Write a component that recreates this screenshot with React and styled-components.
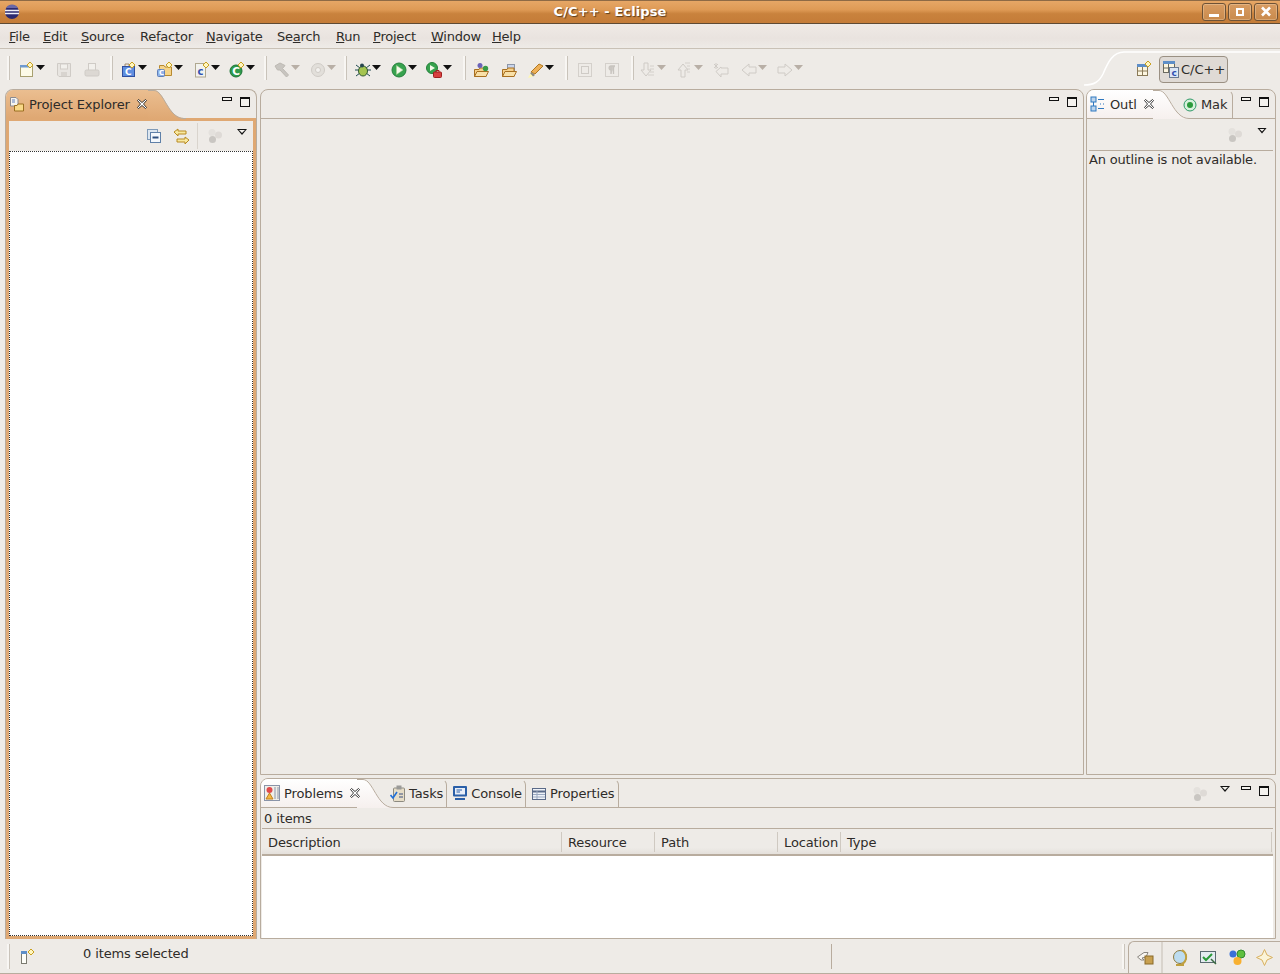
import React from "react";
import styled, { createGlobalStyle } from "styled-components";

const GlobalStyle = createGlobalStyle`
    html, body {
        margin: 0;
        padding: 0;
        background: #EEEBE7;
        font-family: "DejaVu Sans", sans-serif;
        font-size: 13px;
        letter-spacing: -0.12px;
        color: #2e2c29;
    }
    * { box-sizing: border-box; }
`

const Svg = ({ children, w = 16, h = 16 }) => (
    <svg width={w} height={h} viewBox={`0 0 ${w} ${h}`} style={{ display: 'block', flex: 'none' }}>{children}</svg>
)

const Star = ({ x = 11, y = 3 }) => (
    <path d={`M${x} ${y - 3}L${x + 3} ${y}L${x} ${y + 3}L${x - 3} ${y}Z`} fill="#fff6c0" stroke="#c9a020" />
)

const icons = {
    newFile: <Svg><rect x="1.5" y="3.5" width="12" height="11" fill="#fdfbe8" stroke="#a8a070" /><rect x="1" y="3" width="10" height="2.5" fill="#6f9ad0" /><Star /></Svg>,
    save: <Svg><path d="M1.5 1.5H14.5V14.5H3L1.5 13Z" fill="#e8e5e1" stroke="#cfcbc6" /><rect x="4.5" y="2" width="7" height="5" fill="#f2f0ec" stroke="#d2cec9" /><rect x="5" y="10" width="6" height="4" fill="#d8d4cf" /></Svg>,
    print: <Svg><rect x="4.5" y="1.5" width="7" height="7" fill="#f2f0ec" stroke="#cfcbc6" /><rect x="1" y="8" width="14" height="6" rx="1.5" fill="#dcd8d3" stroke="#cfcbc6" /></Svg>,
    cProject: <Svg><path d="M4 4V2H8V4" fill="none" stroke="#a08a70" /><rect x="1.5" y="4.5" width="12" height="10" fill="#5f8ee0" stroke="#2f4f9f" /><text x="4" y="13" fontSize="9" fontWeight="700" fill="#fff" fontFamily="DejaVu Sans">C</text><Star /></Svg>,
    cFolder: <Svg><path d="M2.5 6.5V3.5H7L8 5H14.5V13.5H7" fill="#f5d48a" stroke="#b88a30" /><rect x="0.5" y="7.5" width="7" height="7" rx="1" fill="#8fb0e8" stroke="#5f80b8" /><text x="2" y="13" fontSize="7" fontWeight="700" fill="#fff" fontFamily="DejaVu Sans">C</text><Star x={12} /></Svg>,
    cFile: <Svg><rect x="1.5" y="1.5" width="10" height="13.5" fill="#f2f2ee" stroke="#b0a890" /><text x="3.5" y="12.5" fontSize="10" fontWeight="700" fill="#2f50b0" fontFamily="DejaVu Sans">c</text><Star x={12} /></Svg>,
    gClass: <Svg><circle cx="7" cy="9" r="6" fill="#2e9a4c" stroke="#1d7437" /><text x="3.2" y="13" fontSize="10.5" fontWeight="700" fill="#fff" fontFamily="DejaVu Sans">C</text><Star x={12} /></Svg>,
    hammer: <Svg><path d="M1 4L6 1L11 3.5L8.5 6.5L14.5 13L12.5 15L6 8L3.5 8Z" fill="#c8c5c0" stroke="#bdb9b3" /></Svg>,
    disc: <Svg><circle cx="8" cy="8" r="6.5" fill="#e2dfda" stroke="#cfcbc6" /><circle cx="8" cy="8" r="2.5" fill="#f4f2ef" stroke="#cfcbc6" /></Svg>,
    bug: <Svg><path d="M1 3L5 6M15 3L11 6M0 8H4M12 8H16M1 14L5 11M15 14L11 11" stroke="#1f4a50" /><ellipse cx="8" cy="9" rx="4.5" ry="5" fill="#a4c450" stroke="#2f5a30" /><circle cx="7" cy="3.5" r="2" fill="#27474f" /></Svg>,
    run: <Svg><circle cx="8" cy="8" r="7" fill="#37a24e" stroke="#24803a" /><path d="M5.5 3.5L12 8L5.5 12.5Z" fill="#f4f9ea" stroke="#a8d090" strokeWidth="0.5" /></Svg>,
    runExt: <Svg><circle cx="6" cy="6" r="5.5" fill="#37a24e" stroke="#24803a" /><path d="M4 3L9 6L4 9Z" fill="#f4f9ea" /><rect x="7.5" y="10" width="8" height="5.5" rx="1" fill="#d84040" stroke="#a02020" /><path d="M10 10V8.5H13V10" fill="none" stroke="#a02020" /></Svg>,
    openType: <Svg><path d="M1.5 7.5H6L7 6H13V14.5H1.5Z" fill="#f5d08a" stroke="#a86f20" /><path d="M1.5 14.5L4 9.5H15.5L13 14.5Z" fill="#f8e0a8" stroke="#a86f20" /><circle cx="7" cy="3.5" r="2.5" fill="#6a62b8" /><circle cx="12.5" cy="6.5" r="2.7" fill="#3a9a48" /></Svg>,
    openTask: <Svg><rect x="6.5" y="2.5" width="7" height="6" fill="#c8d4ec" stroke="#8c96a8" /><path d="M1.5 7.5H6L7 6H13V14.5H1.5Z" fill="#f5d08a" stroke="#a86f20" /><path d="M1.5 14.5L4 9.5H15.5L13 14.5Z" fill="#f8e0a8" stroke="#a86f20" /></Svg>,
    pen: <Svg><path d="M3 10L11 2L15 4L7 12Z" fill="#eeb058" stroke="#b07820" /><path d="M3 10L7 13L5 14.5L2 12.5Z" fill="#8c8880" /><path d="M0 16L2.5 11.5L5 14.5Z" fill="#fff8b0" /></Svg>,
    docOutline: <Svg><rect x="1.5" y="1.5" width="13" height="13" fill="#eeebe7" stroke="#d4d0cb" /><rect x="4.5" y="4.5" width="7" height="7" fill="none" stroke="#cfcbc6" /></Svg>,
    pilcrow: <Svg><rect x="1.5" y="1.5" width="13" height="13" fill="#eeebe7" stroke="#d4d0cb" /><path d="M7 12V4H11M9.5 12V4M7 8C4.5 8 4.5 4 7 4" fill="#d0ccc7" stroke="#c8c4bf" strokeWidth="1.3" /></Svg>,
    nextAnn: <Svg><path d="M4 1H8V8H11L6 14L1 8H4Z" fill="#eeebe7" stroke="#cfcbc6" /><path d="M10 4H14M10 7H14M10 10H14M8 13H14" stroke="#d4d0cb" /></Svg>,
    prevAnn: <Svg><path d="M4 15H8V8H11L6 2L1 8H4Z" fill="#eeebe7" stroke="#cfcbc6" /><path d="M8 1H13M10 4H13M10 7H13M10 10H13" stroke="#d4d0cb" /></Svg>,
    lastEdit: <Svg><path d="M1 2L5 6M5 2L1 6M3 1V7" stroke="#cfcbc6" /><path d="M15 6V12H8V15L3 9.5L8 5V6Z" fill="#eeebe7" stroke="#cfcbc6" /></Svg>,
    back: <Svg><path d="M1 8L8 2V5H15V11H8V14Z" fill="#eeebe7" stroke="#cfcbc6" /></Svg>,
    forward: <Svg><path d="M15 8L8 2V5H1V11H8V14Z" fill="#eeebe7" stroke="#cfcbc6" /></Svg>,
    perspective: <Svg><rect x="1.5" y="3.5" width="10" height="11" fill="#fdf6e0" stroke="#8a7a58" /><rect x="1" y="3" width="11" height="3" fill="#5f8fc8" /><path d="M6.5 6V14M2 10H11" stroke="#8a7a58" /><Star x={12} /></Svg>,
    cPersp: <Svg w={17} h={17}><rect x="0.5" y="0.5" width="11" height="11" fill="#fdf6e0" stroke="#6a6a60" /><rect x="0" y="0" width="12" height="3" fill="#5f8fc8" /><path d="M5.5 3V11M1 7H11" stroke="#6a6a60" /><rect x="6.5" y="6.5" width="9" height="10" fill="#dce6f4" stroke="#6a7a90" /><text x="8.5" y="15" fontSize="9" fontWeight="700" fill="#2f50b0" fontFamily="DejaVu Sans">c</text></Svg>,
    explorer: <Svg><path d="M1.5 1.5H7L9 3.5V10H1.5Z" fill="#f6f4ee" stroke="#8a8a90" /><path d="M3 4H6M3 6H6" stroke="#6080c0" /><path d="M5.5 9.5H8L9 8H14.5V15H5.5Z" fill="#f8d888" stroke="#9a6f20" /></Svg>,
    collapse: <Svg><rect x="1.5" y="1.5" width="10" height="10" fill="#dce6f0" stroke="#7f9ab8" /><rect x="4.5" y="4.5" width="10" height="10" fill="#f4f8fc" stroke="#5f80a8" /><path d="M6.5 9.5H12.5" stroke="#2f5080" strokeWidth="2" /></Svg>,
    link: <Svg w={17} h={17}><path d="M1 4L5 1V3H13V6H5V8Z" fill="#f8e8a0" stroke="#b88a20" /><path d="M16 12L12 9V11H4V14H12V16Z" fill="#f8e8a0" stroke="#b88a20" /></Svg>,
    dots: <Svg><circle cx="5" cy="4.5" r="3.5" fill="#e4e1dd" /><circle cx="11.5" cy="7" r="3.5" fill="#dedad6" /><circle cx="5.5" cy="11.5" r="3.5" fill="#c9c6c2" /></Svg>,
    outline: <Svg><rect x="1" y="1" width="5" height="5" fill="#bcd4ec" stroke="#2f78c0" /><rect x="1" y="10" width="5" height="5" fill="#bcd4ec" stroke="#2f78c0" /><path d="M3.5 6V10M8 3.5H14M10 8H11M13 8H14M8 12.5H14" stroke="#2f78c0" /></Svg>,
    make: <Svg w={14} h={14}><circle cx="7" cy="7" r="6" fill="#d8f0dc" stroke="#2f9a68" /><circle cx="7" cy="7" r="3" fill="#2c9a3c" /></Svg>,
    problems: <Svg><rect x="0.5" y="0.5" width="15" height="15" fill="#f0eee8" stroke="#8a94a8" /><circle cx="5.5" cy="5" r="3" fill="#e04a4a" /><path d="M5.5 8L9 14H2Z" fill="#f5b840" stroke="#c08020" /><path d="M11 2V14M14 2V14" stroke="#8a94a8" /></Svg>,
    tasks: <Svg w={15} h={17}><rect x="3.5" y="3" width="11" height="13.5" rx="1" fill="#e6ddc8" stroke="#8c8a80" /><rect x="6.5" y="0.5" width="5" height="4" fill="#9a9a98" /><path d="M0.5 10L3 13L7 7" fill="none" stroke="#1f6fd8" strokeWidth="1.6" /><path d="M9 9H13M9 12H13" stroke="#3a5080" /></Svg>,
    console: <Svg w={14} h={15}><rect x="0" y="0" width="14" height="10.5" rx="1" fill="#2a5fa8" /><rect x="2" y="2" width="10" height="6.5" fill="#e8eef8" /><path d="M3.5 4H9M3.5 6H7" stroke="#2a5fa8" /><path d="M2 13H12" stroke="#2a5fa8" strokeWidth="2" /></Svg>,
    properties: <Svg w={14} h={14}><rect x="0.5" y="1.5" width="13" height="11" fill="#eef2f8" stroke="#5a6a88" /><path d="M1 4.5H13" stroke="#5a6a88" strokeWidth="2" /><path d="M1 7.5H13M1 10H13M5 4V12" stroke="#9aa8c0" /></Svg>,
    fastView: <Svg><rect x="1.5" y="3.5" width="5" height="12" fill="#fdfdf8" stroke="#7a7a70" /><rect x="1" y="3" width="6" height="3" fill="#5f8fc8" /><path d="M11 1L14 4L11 7L8 4Z" fill="#fff6c0" stroke="#c9a020" /></Svg>,
    lock: <Svg w={17} h={14}><path d="M0.5 6L7 1.5H11L9 6L5 7L7 9H4Z" fill="#f8f6f2" stroke="#8a8680" /><rect x="8" y="5" width="8" height="8" fill="#c8a050" stroke="#8a6a28" /></Svg>,
    globe: <Svg w={15} h={18}><circle cx="7" cy="8" r="6.5" fill="#bcdcf0" stroke="#8a7a40" /><path d="M9 1A8 8 0 0 1 9 15" fill="none" stroke="#c0a040" strokeWidth="2" /><path d="M3 16H11" stroke="#c0a040" strokeWidth="2" /></Svg>,
    check: <Svg w={17} h={14}><rect x="0.5" y="0.5" width="15" height="11" fill="#e4ecf0" stroke="#5a6a70" /><path d="M3 6L6 9L12 3" fill="none" stroke="#2a9a38" strokeWidth="2" /><path d="M11 8L16 13" stroke="#3a6a40" strokeWidth="1.5" /></Svg>,
    update: <Svg w={17} h={17}><circle cx="4" cy="5" r="3.5" fill="#3a70d8" /><path d="M12 1A4 4 0 0 1 12 9A4 4 0 0 1 12 1Z" fill="#60c040" stroke="#308a30" /><circle cx="8.5" cy="12" r="4" fill="#f8b030" /></Svg>,
    tip: <Svg w={17} h={17}><path d="M8.5 0.5L11 6L16.5 8.5L11 11L8.5 16.5L6 11L0.5 8.5L6 6Z" fill="#fbf4d8" stroke="#d8b060" /></Svg>,
}

const toolItems = [
    { sep: true, ml: 7 },
    { icon: 'newFile', arrow: true, ml: 9 },
    { icon: 'save', ml: 11 },
    { icon: 'print', ml: 12 },
    { sep: true, ml: 10 },
    { icon: 'cProject', arrow: true, ml: 8 },
    { icon: 'cFolder', arrow: true, ml: 10 },
    { icon: 'cFile', arrow: true, ml: 11 },
    { icon: 'gClass', arrow: true, ml: 9 },
    { sep: true, ml: 9 },
    { icon: 'hammer', arrow: true, off: true, ml: 7 },
    { icon: 'disc', arrow: true, off: true, ml: 10 },
    { sep: true, ml: 8 },
    { icon: 'bug', arrow: true, ml: 8 },
    { icon: 'run', arrow: true, ml: 10 },
    { icon: 'runExt', arrow: true, ml: 9 },
    { sep: true, ml: 11 },
    { icon: 'openType', ml: 7 },
    { icon: 'openTask', ml: 12 },
    { icon: 'pen', arrow: true, ml: 11 },
    { sep: true, ml: 11 },
    { icon: 'docOutline', ml: 9 },
    { icon: 'pilcrow', ml: 11 },
    { sep: true, ml: 11 },
    { icon: 'nextAnn', arrow: true, off: true, ml: 6 },
    { icon: 'prevAnn', arrow: true, off: true, ml: 11 },
    { icon: 'lastEdit', ml: 10 },
    { icon: 'back', arrow: true, off: true, ml: 12 },
    { icon: 'forward', arrow: true, off: true, ml: 10 },
]

const menus = [
    { w: 34, parts: ['', 'F', 'ile'] },
    { w: 38, parts: ['', 'E', 'dit'] },
    { w: 59, parts: ['', 'S', 'ource'] },
    { w: 66, parts: ['Refac', 't', 'or'] },
    { w: 71, parts: ['', 'N', 'avigate'] },
    { w: 59, parts: ['Se', 'a', 'rch'] },
    { w: 37, parts: ['', 'R', 'un'] },
    { w: 58, parts: ['', 'P', 'roject'] },
    { w: 61, parts: ['', 'W', 'indow'] },
    { w: 40, parts: ['', 'H', 'elp'] },
]

const Curve = ({ id, top, bottom }) => (
    <CurveBox>
        <svg width="38" height="29" viewBox="0 0 38 29" style={{ display: 'block' }}>
            <defs>
                <linearGradient id={id} x1="0" y1="0" x2="0" y2="1">
                    <stop offset="0" stopColor={top} />
                    <stop offset="1" stopColor={bottom} />
                </linearGradient>
            </defs>
            <path d="M0 0H6C16 0 20 28 36 28H38V29H0Z" fill={`url(#${id})`} />
            <path d="M0 0.5H6C16 0.5 20 28.5 36 28.5H38" fill="none" stroke="#B8AC9E" />
        </svg>
    </CurveBox>
)

const CloseIcon = () => (
    <CloseMark>
        <svg width="10" height="10" viewBox="0 0 10 10" style={{ display: 'block' }}>
            <path d="M0.5 1.5L1.5 0.5L5 3.5L8.5 0.5L9.5 1.5L6.5 5L9.5 8.5L8.5 9.5L5 6.5L1.5 9.5L0.5 8.5L3.5 5Z" fill="#fff" stroke="#222" strokeWidth="0.9" />
        </svg>
    </CloseMark>
)

const ViewButtons = ({ menu }) => (
    <ViewControls>
        {menu && <MenuArrow />}
        <MinButton />
        <MaxButton />
    </ViewControls>
)

function App(){
    return(
        <>
            <GlobalStyle />
            <Window>
                <TitleBar>
                    <TitleLogo>
                        <svg width="16" height="16" viewBox="0 0 16 16" style={{ display: 'block' }}>
                            <circle cx="8" cy="8" r="7" fill="#2c2a70" />
                            <path d="M2 4A7 7 0 0 1 14 4Z" fill="#6a68a8" />
                            <path d="M1 6.5H15M1 9.5H15" stroke="#f0f0f8" strokeWidth="1.3" />
                        </svg>
                    </TitleLogo>
                    <TitleText>C/C++ - Eclipse</TitleText>
                    <WindowControls>
                        <WindowButton><WinMin /></WindowButton>
                        <WindowButton><WinMax /></WindowButton>
                        <WindowButton>
                            <svg width="12" height="11" viewBox="0 0 12 11" style={{ display: 'block' }}>
                                <path d="M2 1.5L10 9.5M10 1.5L2 9.5" stroke="#fff" strokeWidth="2.6" />
                            </svg>
                        </WindowButton>
                    </WindowControls>
                </TitleBar>

                <MenuBar>
                    {menus.map((m) => (
                        <MenuItem key={m.parts.join('')} $w={m.w}>
                            {m.parts[0]}<u>{m.parts[1]}</u>{m.parts[2]}
                        </MenuItem>
                    ))}
                </MenuBar>

                <ToolBar>
                    {toolItems.map((item, i) => item.sep
                        ? <ToolSep key={i} $ml={item.ml} />
                        : (
                            <ToolItem key={i} $ml={item.ml}>
                                {icons[item.icon]}
                                {item.arrow && <DropArrow $off={item.off} />}
                            </ToolItem>
                        ))}
                    <PerspectiveCurve>
                        <svg width="196" height="40" viewBox="0 0 196 40" style={{ display: 'block' }}>
                            <path d="M0 35C10 35 15 32 19 24C24 12 29 2 40 2H196" fill="none" stroke="#ffffff" strokeWidth="1.5" />
                        </svg>
                    </PerspectiveCurve>
                    <PerspectiveArea>
                        {icons.perspective}
                        <PerspectiveButton>{icons.cPersp}C/C++</PerspectiveButton>
                    </PerspectiveArea>
                </ToolBar>

                <Workspace>
                    <ActiveFolder>
                        <TabStrip>
                            <ActiveTab $w={142}>
                                {icons.explorer}
                                <TabLabel>Project Explorer</TabLabel>
                                <CloseIcon />
                                <Curve id="curveOrange" top="#EBBE90" bottom="#DFA873" />
                            </ActiveTab>
                            <ViewButtons />
                        </TabStrip>
                        <ActiveBody>
                            <ViewToolBar>
                                <ToolSlot $mr={11}>{icons.collapse}</ToolSlot>
                                <ToolSlot $mr={7}>{icons.link}</ToolSlot>
                                <ToolDivider />
                                <ToolSlot $ml={9}>{icons.dots}</ToolSlot>
                                <ToolMenuArrow />
                            </ViewToolBar>
                            <TreeArea />
                        </ActiveBody>
                    </ActiveFolder>

                    <RightColumn>
                        <TopRow>
                            <EditorFolder>
                                <EmptyStrip>
                                    <ViewButtons />
                                </EmptyStrip>
                            </EditorFolder>
                            <OutlineFolder>
                                <TabStrip $line>
                                    <ActiveTab $w={66} $light>
                                        {icons.outline}
                                        <TabLabel>Outl</TabLabel>
                                        <CloseIcon />
                                        <Curve id="curveOutline" top="#ffffff" bottom="#F6F0EE" />
                                    </ActiveTab>
                                    <PlainTab $ml={24} $pr={5}>
                                        {icons.make}
                                        <TabLabel>Mak</TabLabel>
                                    </PlainTab>
                                    <ViewButtons />
                                </TabStrip>
                                <OutlineBar>
                                    {icons.dots}
                                    <ToolMenuArrow />
                                </OutlineBar>
                                <OutlineText>An outline is not available.</OutlineText>
                            </OutlineFolder>
                        </TopRow>

                        <BottomFolder>
                            <TabStrip $line>
                                <ActiveTab $w={96} $light>
                                    {icons.problems}
                                    <TabLabel>Problems</TabLabel>
                                    <CloseIcon />
                                    <Curve id="curveProblems" top="#ffffff" bottom="#F6F0EE" />
                                </ActiveTab>
                                <PlainTab $ml={27}>
                                    {icons.tasks}
                                    <TabLabel>Tasks</TabLabel>
                                </PlainTab>
                                <PlainTab>
                                    {icons.console}
                                    <TabLabel>Console</TabLabel>
                                </PlainTab>
                                <PlainTab>
                                    {icons.properties}
                                    <TabLabel>Properties</TabLabel>
                                </PlainTab>
                                <BottomControls>
                                    {icons.dots}
                                    <ViewButtons menu />
                                </BottomControls>
                            </TabStrip>
                            <ItemCount>0 items</ItemCount>
                            <TableHead>
                                <ColHead $w={300}>Description</ColHead>
                                <ColHead $w={93}>Resource</ColHead>
                                <ColHead $w={123}>Path</ColHead>
                                <ColHead $w={63}>Location</ColHead>
                                <ColHead $w={431}>Type</ColHead>
                            </TableHead>
                            <TableBody />
                        </BottomFolder>
                    </RightColumn>
                </Workspace>

                <StatusBar>
                    <StatusGrip $ml={7} />
                    <StatusIcon>{icons.fastView}</StatusIcon>
                    <StatusText>0 items selected</StatusText>
                    <StatusLine />
                    <StatusGrip $ml={290} />
                    <TrimBox>
                        <TrimIcon>{icons.lock}</TrimIcon>
                        <TrimIcons>
                            {icons.globe}
                            {icons.check}
                            {icons.update}
                            <TipSlot>{icons.tip}</TipSlot>
                        </TrimIcons>
                    </TrimBox>
                </StatusBar>
            </Window>
        </>
    )
}

export default App;

const Window = styled.div`
    width: 1280px;
    height: 974px;
    display: flex;
    flex-direction: column;
    background-color: #EEEBE7;
    overflow: hidden;
`

const TitleBar = styled.div`
    height: 24px;
    flex: none;
    display: flex;
    align-items: center;
    background: linear-gradient(#E6A766 0%, #DE9A55 40%, #C9823D 58%, #C47C38 100%);
    border-top: 1px solid #8E6A45;
    border-bottom: 1px solid #5E4A34;
`

const TitleLogo = styled.div`
    margin-left: 4px;
    flex: none;
`

const TitleText = styled.div`
    flex: 1;
    text-align: center;
    font-weight: 700;
    font-size: 13px;
    letter-spacing: 0.1px;
    color: #fff;
    text-shadow: 1px 1px 1px #5b3c1e;
    padding: 0 2px 2px 0;
`

const WindowControls = styled.div`
    display: flex;
    gap: 2px;
    margin-right: 2px;
    margin-bottom: 1px;
`

const WindowButton = styled.div`
    width: 24px;
    height: 18px;
    display: flex;
    align-items: center;
    justify-content: center;
    border: 1px solid #6E5236;
    border-radius: 3px;
    background: linear-gradient(#D89C62, #C98A4C);
    box-shadow: inset 0 0 0 1px rgba(255, 235, 205, 0.3);
`

const WinMin = styled.div`
    width: 10px;
    height: 3px;
    margin-top: 7px;
    background: #fff;
`

const WinMax = styled.div`
    width: 8px;
    height: 8px;
    border: 2px solid #fff;
`

const MenuBar = styled.div`
    height: 25px;
    flex: none;
    display: flex;
    align-items: center;
    padding: 1px 0 0 9px;
    background: linear-gradient(#EFEAE6 0%, #E9E3DF 60%, #EEEBE7 100%);
    border-bottom: 1px solid #C9C1B6;
`

const MenuItem = styled.div`
    width: ${(p) => p.$w}px;
    flex: none;
    line-height: 24px;
    letter-spacing: -0.22px;
    white-space: nowrap;
    u { text-underline-offset: 1px; }
`

const ToolBar = styled.div`
    height: 40px;
    flex: none;
    display: flex;
    align-items: center;
    position: relative;
    padding-bottom: 2px;
`

const ToolSep = styled.div`
    width: 3px;
    height: 24px;
    flex: none;
    margin-left: ${(p) => p.$ml}px;
    background: #F8F6F3;
    border-right: 1px solid #C9C3BA;
`

const ToolItem = styled.div`
    display: flex;
    align-items: center;
    flex: none;
    margin-top: 3px;
    margin-left: ${(p) => p.$ml}px;
`

const DropArrow = styled.div`
    width: 9px;
    height: 5px;
    margin: -4px 0 0 1px;
    flex: none;
    background: ${(p) => (p.$off ? '#B8AFA6' : '#111')};
    clip-path: polygon(0 0, 100% 0, 50% 100%);
`

const PerspectiveCurve = styled.div`
    position: absolute;
    right: 0;
    top: 1px;
`

const PerspectiveArea = styled.div`
    margin-left: auto;
    margin-right: 52px;
    margin-top: 2px;
    display: flex;
    align-items: center;
    gap: 7px;
    position: relative;
`

const PerspectiveButton = styled.div`
    width: 69px;
    height: 27px;
    display: flex;
    align-items: center;
    gap: 1px;
    padding-left: 3px;
    border: 1px solid #9A9083;
    border-radius: 4px;
    background: #DFDAD5;
    font-size: 13px;
    letter-spacing: 0;
    white-space: nowrap;
`

const Workspace = styled.div`
    height: 850px;
    flex: none;
    display: flex;
    gap: 3px;
    padding-left: 5px;
    padding-right: 4px;
`

const ActiveFolder = styled.div`
    width: 252px;
    flex: none;
    display: flex;
    flex-direction: column;
    border-radius: 8px 8px 0 0;
    border: 1px solid #B8AC9E;
    border-bottom: none;
`

const TabStrip = styled.div`
    height: ${(p) => (p.$line ? 29 : 28)}px;
    flex: none;
    display: flex;
    position: relative;
    ${(p) => p.$line && 'border-bottom: 1px solid #B8AC9E;'}
`

const ActiveTab = styled.div`
    width: ${(p) => p.$w}px;
    display: flex;
    align-items: center;
    gap: 4px;
    flex: none;
    padding-left: 3px;
    position: relative;
    border-radius: 7px 0 0 0;
    background: ${(p) => (p.$light
        ? 'linear-gradient(#ffffff, #F6F0EE)'
        : 'linear-gradient(#EBBE90, #DFA873)')};
`

const CurveBox = styled.div`
    position: absolute;
    left: 100%;
    top: 0;
    z-index: 1;
`

const TabLabel = styled.span`
    white-space: nowrap;
    font-size: 13px;
`

const CloseMark = styled.span`
    margin-left: 3px;
    flex: none;
    position: relative;
    z-index: 2;
`

const PlainTab = styled.div`
    display: flex;
    align-items: center;
    gap: 4px;
    height: 28px;
    padding: 0 ${(p) => p.$pr || 3}px 0 6px;
    margin-left: ${(p) => p.$ml || 0}px;
    border-right: 1px solid #B8AC9E;
    border-top-right-radius: 6px;
    border-top: 1px solid transparent;
    position: relative;
    z-index: 2;
`

const ViewControls = styled.div`
    margin-left: auto;
    display: flex;
    align-items: flex-start;
    gap: 8px;
    padding: 7px 6px 0 0;
    height: 100%;
`

const MinButton = styled.div`
    width: 10px;
    height: 4px;
    border: 1px solid #111;
    background: #F4F2EE;
`

const MaxButton = styled.div`
    width: 10px;
    height: 10px;
    border: 1px solid #111;
    border-top-width: 2px;
    background: #F4F2EE;
`

const MenuArrow = styled.div`
    width: 10px;
    height: 6px;
    margin-right: 3px;
    position: relative;
    &::before {
        content: "";
        position: absolute;
        inset: 0;
        background: #111;
        clip-path: polygon(0 0, 100% 0, 50% 100%);
    }
    &::after {
        content: "";
        position: absolute;
        inset: 1px 2px 2px;
        background: #F4F2EE;
        clip-path: polygon(0 0, 100% 0, 50% 100%);
    }
`

const ActiveBody = styled.div`
    flex: 1;
    display: flex;
    flex-direction: column;
    background: #EEEBE7;
    border: 3px solid #DFA873;
    min-height: 0;
`

const ViewToolBar = styled.div`
    height: 30px;
    flex: none;
    display: flex;
    align-items: center;
    justify-content: flex-end;
    padding-right: 6px;
`

const ToolSlot = styled.div`
    margin-right: ${(p) => p.$mr || 0}px;
    margin-left: ${(p) => p.$ml || 0}px;
`

const ToolDivider = styled.div`
    width: 1px;
    height: 26px;
    background: #D9D4CD;
`

const ToolMenuArrow = styled(MenuArrow)`
    margin: -8px 0 0 14px;
`

const TreeArea = styled.div`
    flex: 1;
    background: #fff;
    border: 1px dotted #333;
`

const RightColumn = styled.div`
    flex: 1;
    min-width: 0;
    display: flex;
    flex-direction: column;
    gap: 3px;
`

const TopRow = styled.div`
    height: 686px;
    flex: none;
    display: flex;
    gap: 2px;
`

const EditorFolder = styled.div`
    width: 824px;
    flex: none;
    border: 1px solid #B8AC9E;
    border-radius: 8px 8px 0 0;
`

const EmptyStrip = styled.div`
    height: 29px;
    display: flex;
    border-bottom: 1px solid #B8AC9E;
`

const OutlineFolder = styled.div`
    flex: 1;
    min-width: 0;
    display: flex;
    flex-direction: column;
    border: 1px solid #B8AC9E;
    border-radius: 8px 8px 0 0;
`

const OutlineBar = styled.div`
    height: 32px;
    flex: none;
    display: flex;
    align-items: center;
    justify-content: flex-end;
    padding-right: 6px;
    margin: 0 2px;
    border-bottom: 1px solid #B8AC9E;
`

const OutlineText = styled.div`
    padding: 1px 2px 0;
    line-height: 16px;
    letter-spacing: -0.18px;
`

const BottomFolder = styled.div`
    flex: 1;
    min-height: 0;
    display: flex;
    flex-direction: column;
    border: 1px solid #B8AC9E;
    border-radius: 8px 8px 0 0;
`

const BottomControls = styled.div`
    margin-left: auto;
    display: flex;
    gap: 12px;
    padding-top: 7px;
    ${ViewControls} { padding-top: 0; }
`

const ItemCount = styled.div`
    height: 20px;
    flex: none;
    line-height: 22px;
    padding-left: 3px;
`

const TableHead = styled.div`
    height: 28px;
    flex: none;
    display: flex;
    align-items: center;
    margin-left: 1px;
    margin-right: 2px;
    border-top: 1px solid #B8AC9E;
    border-bottom: 2px solid #B8AC9E;
    background: linear-gradient(#EEEBE7 75%, #E4E0DB);
`

const ColHead = styled.div`
    width: ${(p) => p.$w}px;
    height: 20px;
    line-height: 22px;
    flex: none;
    padding-left: 6px;
    border-right: 1px solid #CFC9C1;
    white-space: nowrap;
    overflow: hidden;
`

const TableBody = styled.div`
    flex: 1;
    margin: 0 2px 0 1px;
    background: #fff;
`

const StatusBar = styled.div`
    height: 35px;
    flex: none;
    display: flex;
    align-items: center;
    border-bottom: 1px solid #B8AC9E;
`

const StatusGrip = styled.div`
    width: 3px;
    height: 25px;
    flex: none;
    margin-left: ${(p) => p.$ml}px;
    background: #F8F6F3;
    border-right: 1px solid #C9C3BA;
`

const StatusIcon = styled.div`
    margin-left: 10px;
`

const StatusText = styled.div`
    margin-left: 47px;
    width: 748px;
    margin-top: -5px;
`

const StatusLine = styled.div`
    width: 1px;
    height: 25px;
    flex: none;
    background: #B8AC9E;
`

const TrimBox = styled.div`
    margin-left: 3px;
    align-self: flex-end;
    flex: 1;
    height: 32px;
    display: flex;
    align-items: center;
    border: 1px solid #B8AC9E;
    border-bottom: none;
    border-right: none;
    border-radius: 6px 0 0 0;
`

const TrimIcon = styled.div`
    width: 34px;
    height: 100%;
    flex: none;
    display: flex;
    justify-content: center;
    align-items: center;
    border-right: 2px solid #D9D4CD;
`

const TrimIcons = styled.div`
    display: flex;
    align-items: center;
    gap: 12px;
    padding-left: 10px;
`

const TipSlot = styled.div`
    margin-left: -2px;
`
